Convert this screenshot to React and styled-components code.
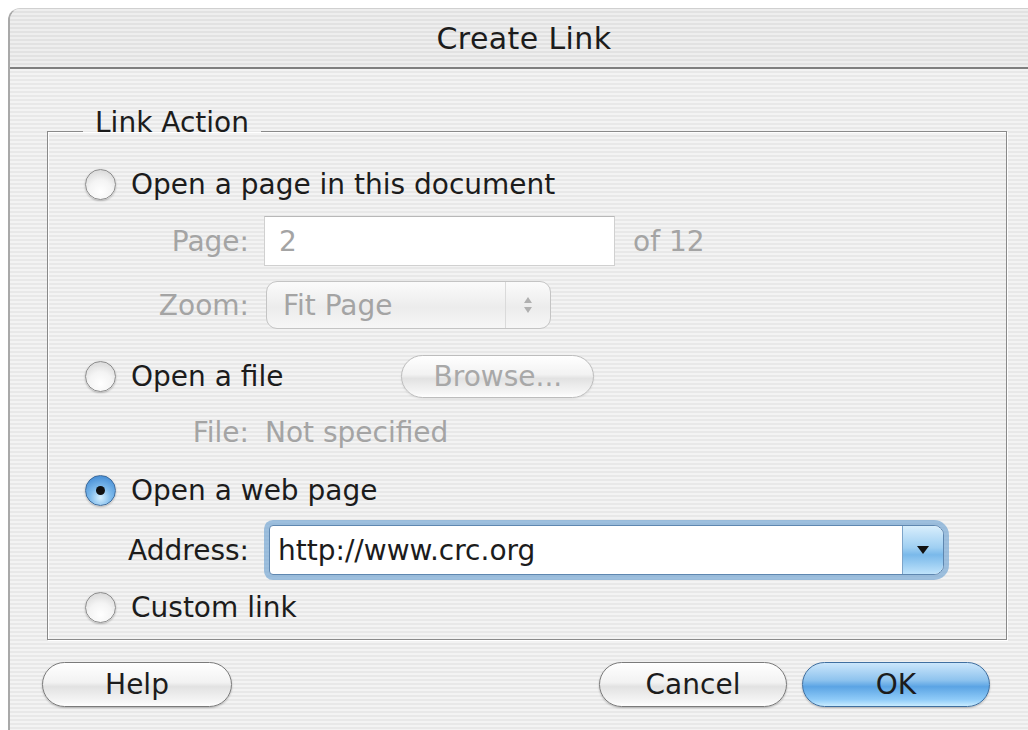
import styled, { createGlobalStyle, css } from "styled-components";

const GlobalStyle = createGlobalStyle`
  html, body {
    margin: 0;
    padding: 0;
    background: #ffffff;
    overflow: hidden;
  }
  body {
    font-family: "DejaVu Sans", "Liberation Sans", sans-serif;
  }
`;

const pinstripe = css`
  background: repeating-linear-gradient(
    to bottom,
    #f3f3f3 0px,
    #f3f3f3 2px,
    #e8e8e8 2px,
    #e8e8e8 4px
  );
`;

const Window = styled.div`
  margin: 8px 0 0 8px;
  width: 1028px;
  height: 740px;
  display: flex;
  flex-direction: column;
  border-left: 2px solid #a9a9a9;
  border-top: 1px solid #d0d0d0;
  border-top-left-radius: 12px;
  overflow: hidden;
  ${pinstripe};
`;

const TitleBar = styled.div`
  height: 58px;
  display: flex;
  align-items: center;
  justify-content: center;
  border-bottom: 2px solid #7f7f7f;
  background: repeating-linear-gradient(
    to bottom,
    #eeeeee 0px,
    #eeeeee 2px,
    #e2e2e2 2px,
    #e2e2e2 4px
  );
  font-size: 30px;
  color: #1c1c1c;
  letter-spacing: 0.4px;
`;

const Body = styled.div`
  display: flex;
  flex-direction: column;
  padding: 0 31px 0 0;
`;

const Group = styled.fieldset`
  margin: 38px 0 0 37px;
  padding: 9px 0 12px 0;
  border: 1px solid #8a8a8a;
  box-shadow: 1px 1px 0 #ffffff, inset 1px 1px 0 #ffffff;
  min-width: 0;
`;

/* text sits above the frame line, so the box is padded below */
const Legend = styled.legend`
  margin-left: 35px;
  padding: 0 12px 16px;
  font-size: 28px;
  line-height: 32px;
  color: #1c1c1c;
`;

const Row = styled.div`
  display: flex;
  align-items: center;
  height: ${(p) => p.$h}px;
  margin-top: ${(p) => p.$top || 0}px;
  padding-left: ${(p) => (p.$radio ? 37 : 0)}px;
`;

const RadioCircle = styled.span`
  box-sizing: border-box;
  width: 31px;
  height: 31px;
  border-radius: 50%;
  flex-shrink: 0;
  display: flex;
  align-items: center;
  justify-content: center;
  border: 1.5px solid ${(p) => (p.$on ? "#3f6c9c" : "#8d8d8d")};
  background: ${(p) =>
    p.$on
      ? "radial-gradient(circle at 50% 75%, #d6f0ff 0%, #7fbbec 40%, #3f88d2 90%)"
      : "radial-gradient(circle at 50% 75%, #ffffff 0%, #f4f4f4 45%, #cfcfcf 100%)"};
  box-shadow: 0 1px 2px rgba(0, 0, 0, 0.25);

  &::after {
    content: "";
    display: ${(p) => (p.$on ? "block" : "none")};
    width: 9px;
    height: 9px;
    border-radius: 50%;
    background: #111;
  }
`;

const Text = styled.span`
  font-size: 28px;
  color: ${(p) => (p.$dim ? "#a4a4a4" : "#1c1c1c")};
  white-space: nowrap;
`;

const RadioText = styled(Text)`
  margin-left: 15px;
`;

const FieldLabel = styled(Text)`
  width: 201px;
  text-align: right;
  flex-shrink: 0;
`;

const TextField = styled.div`
  box-sizing: border-box;
  margin-left: 15px;
  width: 351px;
  height: 50px;
  display: flex;
  align-items: center;
  padding-left: 14px;
  background: #ffffff;
  border: 1px solid #d0d0d0;
  border-top-color: #b8b8b8;
  font-size: 28px;
  color: #a4a4a4;
`;

const Suffix = styled(Text)`
  margin-left: ${(p) => p.$ml || 18}px;
`;

const PopUp = styled.div`
  box-sizing: border-box;
  margin-left: 17px;
  width: 285px;
  height: 48px;
  display: flex;
  border: 1px solid #c4c4c4;
  border-radius: 11px;
  background: linear-gradient(to bottom, #fbfbfb, #ececec 55%, #f6f6f6);
  overflow: hidden;
`;

const PopUpValue = styled.span`
  flex: 1;
  display: flex;
  align-items: center;
  padding-left: 16px;
  font-size: 28px;
  color: #a4a4a4;
`;

const Stepper = styled.span`
  width: 44px;
  display: flex;
  align-items: center;
  justify-content: center;
  border-left: 1px solid #dadada;
`;

const PillButton = styled.button`
  box-sizing: border-box;
  width: ${(p) => p.$w}px;
  height: ${(p) => p.$h || 45}px;
  margin-left: ${(p) => p.$ml || 0}px;
  border-radius: 24px;
  font-family: inherit;
  font-size: 28px;
  padding: 0;
  cursor: default;
  color: ${(p) => (p.$dim ? "#a8a8a8" : "#1c1c1c")};
  border: 1.5px solid ${(p) => (p.$dim ? "#bdbdbd" : p.$blue ? "#3f6fa0" : "#7b7b7b")};
  background: ${(p) =>
    p.$blue
      ? "linear-gradient(to bottom, #cbe6fb 0%, #8ec3ee 40%, #5ba4e4 55%, #8fcbf8 85%, #c8ecff 100%)"
      : "linear-gradient(to bottom, #ffffff 0%, #f2f2f2 45%, #e2e2e2 55%, #f6f6f6 90%, #ffffff 100%)"};
  box-shadow: 0 1px 2px rgba(0, 0, 0, ${(p) => (p.$dim ? 0.08 : 0.25)});
`;

const Combo = styled.div`
  box-sizing: border-box;
  margin-left: 20px;
  width: 675px;
  height: 50px;
  display: flex;
  border: 1px solid #5f87b0;
  border-radius: 4px 10px 10px 4px;
  box-shadow: 0 0 0 5px rgba(120, 168, 212, 0.7);
  background: #ffffff;
`;

const ComboInput = styled.span`
  flex: 1;
  display: flex;
  align-items: center;
  padding-left: 8px;
  font-size: 28px;
  color: #1c1c1c;
`;

const ComboArrow = styled.span`
  width: 40px;
  display: flex;
  align-items: center;
  justify-content: center;
  border-left: 1px solid #7da4c9;
  border-radius: 0 9px 9px 0;
  background: linear-gradient(to bottom, #d8eefc 0%, #9fcff2 45%, #7ab9ea 60%, #bfe3fb 100%);
`;

const ButtonBar = styled.div`
  display: flex;
  align-items: center;
  margin: 22px 17px 0 32px;
  gap: 15px;
`;

const Spacer = styled.div`
  flex: 1;
`;

const Radio = ({ on, label }) => (
  <>
    <RadioCircle $on={on} />
    <RadioText>{label}</RadioText>
  </>
);

const App = () => {
  return (
    <>
      <GlobalStyle />
      <Window>
        <TitleBar>Create Link</TitleBar>
        <Body>
          <Group>
            <Legend>Link Action</Legend>

            <Row $radio $h={40}>
              <Radio label="Open a page in this document" />
            </Row>
            <Row $h={50} $top={12}>
              <FieldLabel $dim>Page:</FieldLabel>
              <TextField>2</TextField>
              <Suffix $dim>of 12</Suffix>
            </Row>
            <Row $h={48} $top={15}>
              <FieldLabel $dim>Zoom:</FieldLabel>
              <PopUp>
                <PopUpValue>Fit Page</PopUpValue>
                <Stepper>
                  <svg width="10" height="20" viewBox="0 0 10 20">
                    <path d="M5 2 L9 8 L1 8 Z" fill="#b0b0b0" />
                    <path d="M5 18 L9 12 L1 12 Z" fill="#b0b0b0" />
                  </svg>
                </Stepper>
              </PopUp>
            </Row>

            <Row $radio $h={44} $top={25}>
              <Radio label="Open a file" />
              <PillButton $dim $w={193} $h={43} $ml={118}>
                Browse...
              </PillButton>
            </Row>
            <Row $h={30} $top={19}>
              <FieldLabel $dim>File:</FieldLabel>
              <Suffix $dim $ml={16}>
                Not specified
              </Suffix>
            </Row>

            <Row $radio $h={40} $top={23}>
              <Radio on label="Open a web page" />
            </Row>
            <Row $h={60} $top={10}>
              <FieldLabel>Address:</FieldLabel>
              <Combo>
                <ComboInput>http://www.crc.org</ComboInput>
                <ComboArrow>
                  <svg width="14" height="10" viewBox="0 0 14 10">
                    <path d="M1 1 L13 1 L7 9 Z" fill="#111" />
                  </svg>
                </ComboArrow>
              </Combo>
            </Row>

            <Row $radio $h={40} $top={7}>
              <Radio label="Custom link" />
            </Row>
          </Group>

          <ButtonBar>
            <PillButton $w={190}>Help</PillButton>
            <Spacer />
            <PillButton $w={188}>Cancel</PillButton>
            <PillButton $blue $w={188}>
              OK
            </PillButton>
          </ButtonBar>
        </Body>
      </Window>
    </>
  );
};

export default App;
